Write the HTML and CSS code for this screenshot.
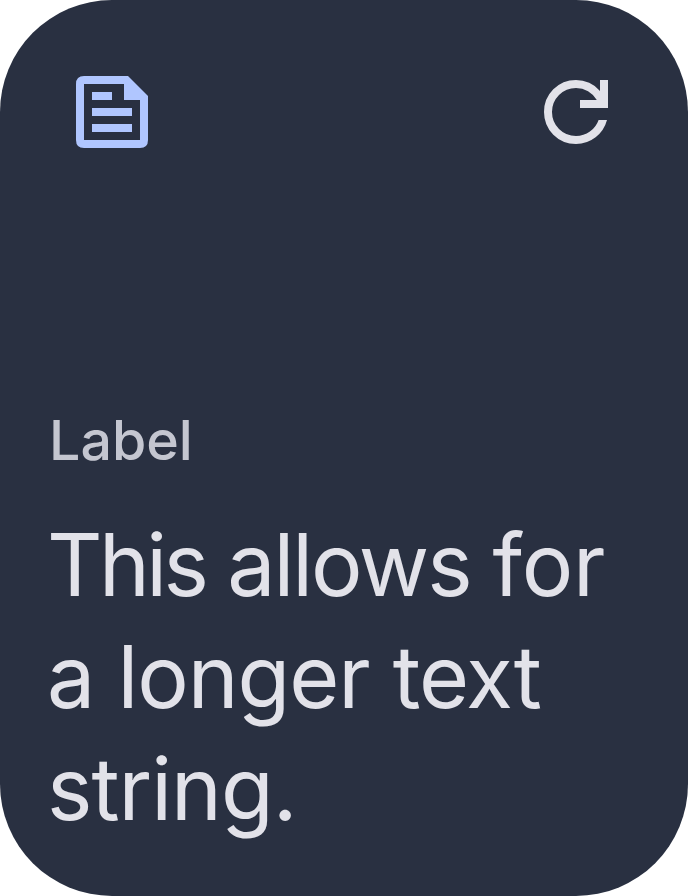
FILE: index.html
```html
<!DOCTYPE html>
<html lang="en">
<head>
<meta charset="utf-8">
<title>Widget</title>
<link rel="stylesheet" href="styles.css">
</head>
<body>
<main class="card">
  <header class="toolbar">
    <svg class="icon icon-article" viewBox="0 0 72 72" aria-hidden="true">
      <path fill-rule="evenodd" d="M8 0H52L72 20V64Q72 72 64 72H8Q0 72 0 64V8Q0 0 8 0ZM8 8V64H64V24H48V8ZM16 16H36V24H16ZM16 32H56V40H16ZM16 48H56V56H16Z"/>
    </svg>
    <svg class="icon icon-refresh" viewBox="0 0 64 64" aria-hidden="true">
      <path d="M32 64Q18.6 64 9.3 54.7Q0 45.4 0 32Q0 18.6 9.3 9.3Q18.6 0 32 0Q38.9 0 45.2 2.85Q51.5 5.7 56 11V0H64V28H36V20H52.8Q49.6 14.4 44.05 11.2Q38.5 8 32 8Q22 8 15 15Q8 22 8 32Q8 42 15 49Q22 56 32 56Q39.7 56 45.9 51.6Q52.1 47.2 54.6 40H63Q60.2 50.6 51.6 57.3Q43 64 32 64Z"/>
    </svg>
  </header>
  <section class="content">
    <p class="label">Label</p>
    <h1 class="title">
      <span class="line line-one"><span class="tight">This</span> allows <span class="loose">for</span></span>
      <span class="line line-two">a longer text</span>
      <span class="line line-three">string.</span>
    </h1>
  </section>
</main>
</body>
</html>
```
FILE: styles.css
```css
* { box-sizing: border-box; }
body { margin: 0; background: #fff; }
.card {
  display: flex;
  flex-direction: column;
  justify-content: space-between;
  width: 688px;
  height: 896px;
  padding: 76px 48px 51px;
  border-radius: 112px;
  background: #293041;
  font-family: "Google Sans", Inter, sans-serif;
}
.toolbar {
  display: flex;
  justify-content: space-between;
  align-items: center;
  padding: 0 32px 0 28px;
}
.icon { display: block; }
.icon-article { width: 72px; height: 72px; fill: #b0c6ff; }
.icon-refresh { width: 64px; height: 64px; fill: #e2e2e9; }
.label {
  margin: 0 0 29px 1px;
  font-size: 55.5px;
  line-height: 80px;
  font-weight: 500;
  letter-spacing: 0;
  color: #c4c6d0;
}
.title {
  margin: 0 0 0 -1px;
  font-size: 86px;
  line-height: 112px;
  font-weight: 400;
  color: #e2e2e9;
}
.line { display: block; white-space: nowrap; }
.line-one { letter-spacing: -2.1px; }
.line-one .tight { letter-spacing: -3.6px; }
.line-one .loose { letter-spacing: -0.2px; }
.line-two { letter-spacing: -1.05px; }
.line-three { letter-spacing: -1px; }
```
